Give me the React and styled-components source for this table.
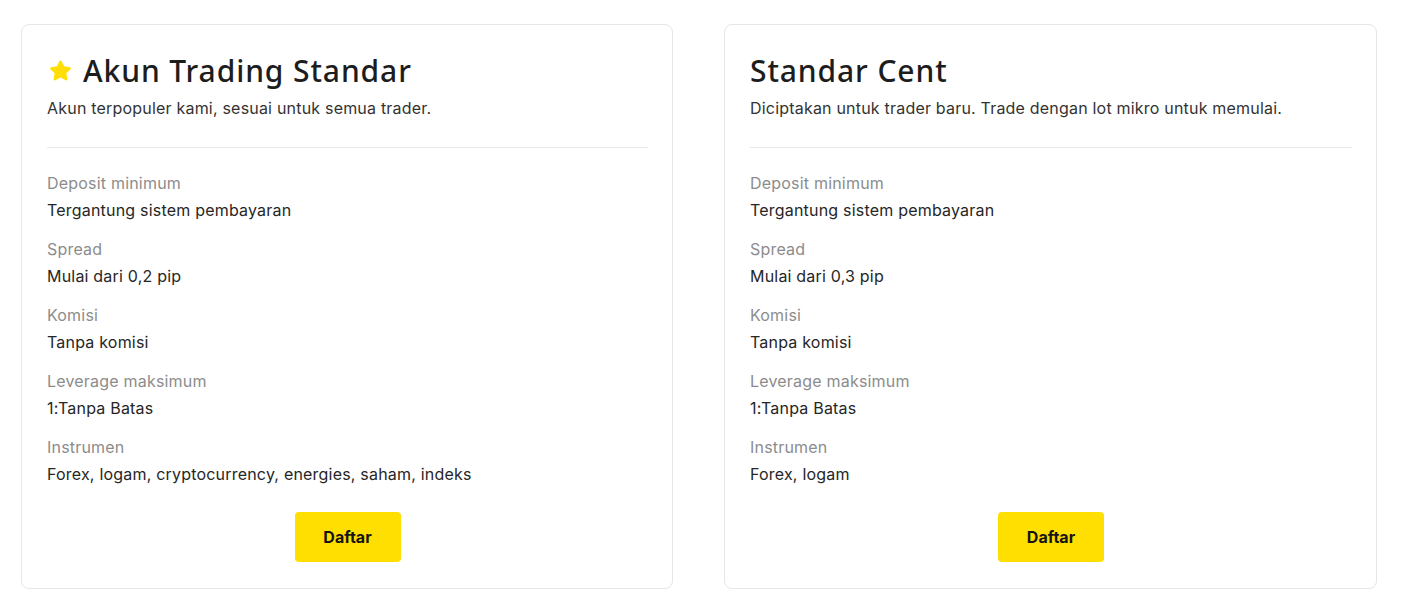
import React from 'react'
import styled, { createGlobalStyle } from 'styled-components'


// global
const GlobalStyle = createGlobalStyle`
  body {
    margin: 0;
    background: #fff;
    font-family: Inter, "Liberation Sans", sans-serif;
    color: #252525;
  }
`


// styled components
const Page = styled.div`
  display: grid;
  grid-template-columns: 652px 653px;
  gap: 51px;
  padding: 24px 0 0 21px;
`

const Card = styled.div`
  display: flex;
  flex-direction: column;
  height: 565px;
  box-sizing: border-box;
  padding: 27px 24px 26px 25px;
  border: 1px solid #e6e6e6;
  border-radius: 8px;
`

const Title = styled.h2`
  display: flex;
  align-items: center;
  gap: 9px;
  margin: 0;
  font-family: "Noto Sans", sans-serif;
  font-weight: 500;
  font-size: 30px;
  line-height: 38px;
  color: #1d1d1d;
  letter-spacing: 0.9px;
`

const Subtitle = styled.p`
  margin: 6px 0 0;
  font-size: 16px;
  line-height: 24px;
  color: #333;
  letter-spacing: 0.2px;
`

const Divider = styled.hr`
  margin: 27px 0 23px;
  border: 0;
  border-top: 1px solid #e8e8e8;
`

const Specs = styled.dl`
  display: flex;
  flex-direction: column;
  gap: 15.5px;
  margin: 0;
`

const Spec = styled.div`
  display: flex;
  flex-direction: column;
  gap: 2.5px;
`

const Label = styled.dt`
  font-size: 16px;
  line-height: 24px;
  color: #8c8c8c;
  letter-spacing: 0.2px;
`

const Value = styled.dd`
  margin: 0;
  font-size: 16px;
  line-height: 24px;
  color: #262626;
  letter-spacing: 0.2px;
`

const Footer = styled.div`
  display: flex;
  justify-content: center;
  margin-top: auto;
`

const Button = styled.button`
  width: 106px;
  height: 50px;
  border: 0;
  border-radius: 4px;
  background: #ffde02;
  font-family: Inter, "Liberation Sans", sans-serif;
  font-weight: 700;
  font-size: 16px;
  color: #141414;
  cursor: pointer;
`


// components
function Star() {
  return (
    <svg width="27" height="26" viewBox="0 0 24 24">
      <path
        d="M12 2.2c.4 0 .7.2.9.6l2.4 4.9 5.4.8c.9.1 1.2 1.2.6 1.8l-3.9 3.8.9 5.4c.2.9-.8 1.5-1.5 1.1L12 18l-4.8 2.6c-.8.4-1.7-.2-1.5-1.1l.9-5.4-3.9-3.8c-.6-.6-.3-1.7.6-1.8l5.4-.8 2.4-4.9c.2-.4.5-.6.9-.6z"
        fill="#ffde02"
      />
    </svg>
  )
}

function AccountCard({ title, starred, subtitle, specs }) {
  return (
    <Card>
      <Title>
        {starred && <Star />}
        {title}
      </Title>
      <Subtitle>{subtitle}</Subtitle>
      <Divider />
      <Specs>
        {specs.map(([label, value]) => (
          <Spec key={label}>
            <Label>{label}</Label>
            <Value>{value}</Value>
          </Spec>
        ))}
      </Specs>
      <Footer>
        <Button>Daftar</Button>
      </Footer>
    </Card>
  )
}

const accounts = [
  {
    title: 'Akun Trading Standar',
    starred: true,
    subtitle: 'Akun terpopuler kami, sesuai untuk semua trader.',
    specs: [
      ['Deposit minimum', 'Tergantung sistem pembayaran'],
      ['Spread', 'Mulai dari 0,2 pip'],
      ['Komisi', 'Tanpa komisi'],
      ['Leverage maksimum', '1:Tanpa Batas'],
      ['Instrumen', 'Forex, logam, cryptocurrency, energies, saham, indeks'],
    ],
  },
  {
    title: 'Standar Cent',
    subtitle: 'Diciptakan untuk trader baru. Trade dengan lot mikro untuk memulai.',
    specs: [
      ['Deposit minimum', 'Tergantung sistem pembayaran'],
      ['Spread', 'Mulai dari 0,3 pip'],
      ['Komisi', 'Tanpa komisi'],
      ['Leverage maksimum', '1:Tanpa Batas'],
      ['Instrumen', 'Forex, logam'],
    ],
  },
]


// page component
export default function App() {
  return (
    <>
      <GlobalStyle />
      <Page>
        {accounts.map((a) => (
          <AccountCard key={a.title} {...a} />
        ))}
      </Page>
    </>
  )
}
